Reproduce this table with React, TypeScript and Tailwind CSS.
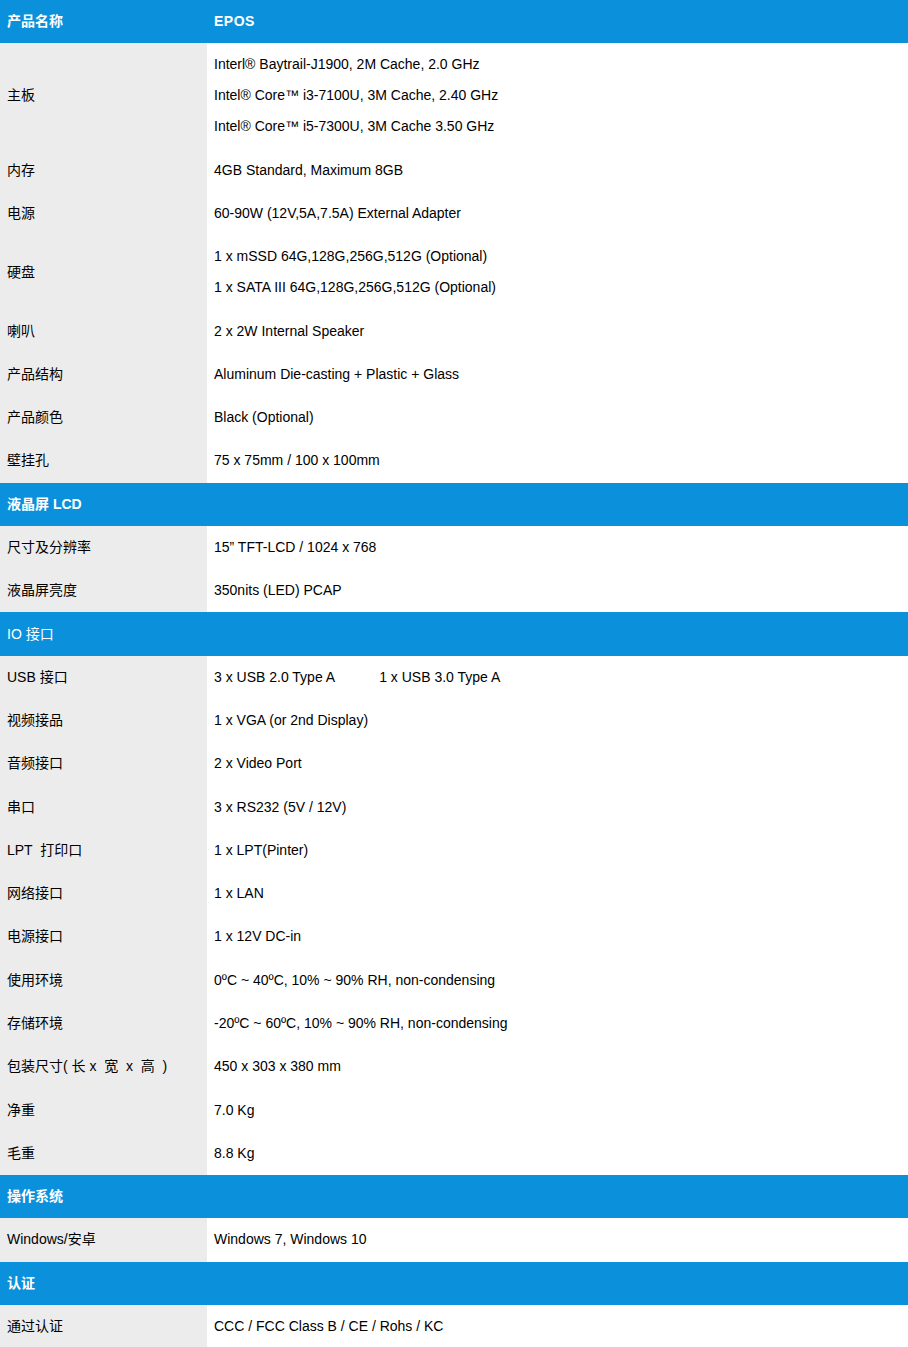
import React from "react";

type Row =
  | { type: "head"; label: string; value?: string; bold?: boolean }
  | { type: "row"; label: string; lines: React.ReactNode[] };

const ROWS: Row[] = [
  { type: "head", label: "产品名称", value: "EPOS" },
  {
    type: "row",
    label: "主板",
    lines: [
      "Interl® Baytrail-J1900, 2M Cache, 2.0 GHz",
      "Intel® Core™ i3-7100U, 3M Cache, 2.40 GHz",
      "Intel® Core™ i5-7300U, 3M Cache 3.50 GHz",
    ],
  },
  { type: "row", label: "内存", lines: ["4GB Standard, Maximum 8GB"] },
  { type: "row", label: "电源", lines: ["60-90W (12V,5A,7.5A) External Adapter"] },
  {
    type: "row",
    label: "硬盘",
    lines: [
      "1 x mSSD 64G,128G,256G,512G (Optional)",
      "1 x SATA III 64G,128G,256G,512G (Optional)",
    ],
  },
  { type: "row", label: "喇叭", lines: ["2 x 2W Internal Speaker"] },
  { type: "row", label: "产品结构", lines: ["Aluminum Die-casting + Plastic + Glass"] },
  { type: "row", label: "产品颜色", lines: ["Black (Optional)"] },
  { type: "row", label: "壁挂孔", lines: ["75 x 75mm / 100 x 100mm"] },
  { type: "head", label: "液晶屏 LCD" },
  { type: "row", label: "尺寸及分辨率", lines: ["15” TFT-LCD / 1024 x 768"] },
  { type: "row", label: "液晶屏亮度", lines: ["350nits (LED) PCAP"] },
  { type: "head", label: "IO 接口", bold: false },
  {
    type: "row",
    label: "USB 接口",
    lines: [
      <span key="usb">
        3 x USB 2.0 Type A<span className="ml-[44px]">1 x USB 3.0 Type A</span>
      </span>,
    ],
  },
  { type: "row", label: "视频接品", lines: ["1 x VGA (or 2nd Display)"] },
  { type: "row", label: "音频接口", lines: ["2 x Video Port"] },
  { type: "row", label: "串口", lines: ["3 x RS232 (5V / 12V)"] },
  { type: "row", label: "LPT  打印口", lines: ["1 x LPT(Pinter)"] },
  { type: "row", label: "网络接口", lines: ["1 x LAN"] },
  { type: "row", label: "电源接口", lines: ["1 x 12V DC-in"] },
  { type: "row", label: "使用环境", lines: ["0ºC ~ 40ºC, 10% ~ 90% RH, non-condensing"] },
  { type: "row", label: "存储环境", lines: ["-20ºC ~ 60ºC, 10% ~ 90% RH, non-condensing"] },
  { type: "row", label: "包装尺寸( 长 x  宽  x  高  )", lines: ["450 x 303 x 380 mm"] },
  { type: "row", label: "净重", lines: ["7.0 Kg"] },
  { type: "row", label: "毛重", lines: ["8.8 Kg"] },
  { type: "head", label: "操作系统" },
  { type: "row", label: "Windows/安卓", lines: ["Windows 7, Windows 10"] },
  { type: "head", label: "认证" },
  { type: "row", label: "通过认证", lines: ["CCC / FCC Class B / CE / Rohs / KC"] },
];

export default function App() {
  return (
    <div
      className="w-[908px] bg-white text-[14px] text-black"
      style={{ fontFamily: '"Liberation Sans", Arial, "Noto Sans CJK SC", sans-serif' }}
    >
      {ROWS.map((r, i) =>
        r.type === "head" ? (
          <div key={i} className="flex bg-[#0b91db] text-white">
            <div
              className={`w-[207px] shrink-0 px-[7px] py-[11.15px] leading-[21px] whitespace-pre ${
                r.bold === false ? "font-normal" : "font-bold"
              }`}
            >
              {r.label}
            </div>
            <div className="flex-1 px-[7px] py-[11.15px] leading-[21px] font-bold tracking-[0.5px]">
              {r.value}
            </div>
          </div>
        ) : (
          <div key={i} className="flex">
            <div className="w-[207px] shrink-0 bg-[#ececec] px-[7px] py-[11.15px] leading-[21px] flex items-center whitespace-pre">
              {r.label}
            </div>
            <div className="flex-1 px-[7px] py-[11.15px] leading-[21px] flex flex-col gap-[10px]">
              {r.lines.map((l, j) => (
                <div key={j} className="whitespace-pre">
                  {l}
                </div>
              ))}
            </div>
          </div>
        )
      )}
    </div>
  );
}
